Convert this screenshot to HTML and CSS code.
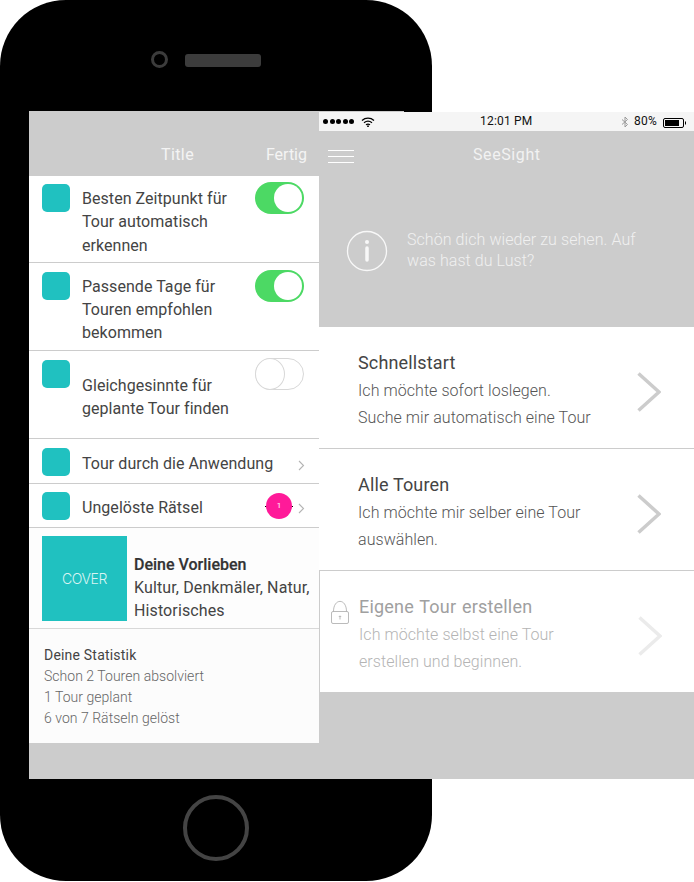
FILE: index.html
```html
<!DOCTYPE html>
<html lang="de">
<head>
<meta charset="utf-8">
<title>SeeSight</title>
<link rel="stylesheet" href="styles.css">
</head>
<body>
<div class="stage">
  <div class="phone">
    <span class="camera"></span>
    <span class="speaker"></span>
    <span class="phone-screen"></span>
    <span class="home"></span>
  </div>
  <div class="screens">
    <section class="settings">
      <header class="settings-head">
        <span class="settings-title">Title</span>
        <span class="settings-done">Fertig</span>
      </header>
      <div class="row row-first">
        <span class="tile"></span>
        <p class="row-text">Besten Zeitpunkt für<br>Tour automatisch<br>erkennen</p>
        <span class="toggle toggle-on"><span class="knob"></span></span>
      </div>
      <div class="row row-tall">
        <span class="tile"></span>
        <p class="row-text">Passende Tage für<br>Touren empfohlen<br>bekommen</p>
        <span class="toggle toggle-on"><span class="knob"></span></span>
      </div>
      <div class="row row-tall row-off">
        <span class="tile"></span>
        <p class="row-text">Gleichgesinnte für<br>geplante Tour finden</p>
        <span class="toggle toggle-off"><span class="knob"></span></span>
      </div>
      <div class="row row-link">
        <span class="tile"></span>
        <p class="row-text">Tour durch die Anwendung</p>
        <svg class="chev-small" viewBox="0 0 8 12" width="8" height="12"><path d="M1 1l4.500 4.500L1 10"/></svg>
      </div>
      <div class="row row-link row-last">
        <span class="tile"></span>
        <p class="row-text">Ungelöste Rätsel</p>
        <span class="badge">1</span>
        <svg class="chev-small" viewBox="0 0 8 12" width="8" height="12"><path d="M1 1l4.500 4.500L1 10"/></svg>
      </div>
      <div class="prefs">
        <div class="cover">COVER</div>
        <p class="prefs-text"><b>Deine Vorlieben</b><br>Kultur, Denkmäler, Natur,<br>Historisches</p>
      </div>
      <div class="stats">
        <h2 class="stats-title">Deine Statistik</h2>
        <p class="stats-line">Schon 2 Touren absolviert</p>
        <p class="stats-line">1 Tour geplant</p>
        <p class="stats-line">6 von 7 Rätseln gelöst</p>
      </div>
    </section>
    <section class="home-screen">
      <div class="status">
        <div class="status-left">
          <span class="dots"><i></i><i></i><i></i><i></i><i></i></span>
          <svg class="wifi" viewBox="0 0 14 10" width="14" height="10"><path d="M1 3.500C4.500 .4 9.500 .4 13 3.500M3 5.800C5.500 3.800 8.500 3.800 11 5.800M5 7.800C6.200 7 7.800 7 9 7.800"/><circle cx="7" cy="9.200" r=".9"/></svg>
        </div>
        <span class="status-time">12:01 PM</span>
        <div class="status-right">
          <svg class="bt" viewBox="0 0 8 12" width="8" height="12"><path d="M1 3.500l5.500 5L4 11V1l2.500 2.500L1 8.500"/></svg>
          <span class="pct">80%</span>
          <svg class="battery" viewBox="0 0 24 10" width="24" height="10"><rect x=".5" y=".5" width="20" height="9" rx="1.500" fill="none" stroke="#000"/><rect x="2" y="2" width="14" height="6" fill="#000"/><path d="M22 3.500h1v3h-1z" fill="#000"/></svg>
        </div>
      </div>
      <div class="hero">
        <div class="nav">
          <span class="burger"><i></i><i></i><i></i></span>
          <span class="nav-title">SeeSight</span>
        </div>
        <div class="hello">
          <svg class="info" viewBox="0 0 42 42" width="42" height="42"><circle cx="21" cy="21" r="19.500"/><circle class="info-dot" cx="21" cy="12" r="2"/><path d="M21 18v12"/></svg>
          <p class="hello-text">Schön dich wieder zu sehen. Auf<br>was hast du Lust?</p>
        </div>
      </div>
      <a class="item">
        <div class="item-body">
          <h3 class="item-title">Schnellstart</h3>
          <p class="item-sub">Ich möchte sofort loslegen.<br>Suche mir automatisch eine Tour</p>
        </div>
        <svg class="chev" viewBox="0 0 24 40" width="24" height="40"><path d="M1.500 1.500L22 20 1.500 38.500"/></svg>
      </a>
      <a class="item">
        <div class="item-body">
          <h3 class="item-title">Alle Touren</h3>
          <p class="item-sub">Ich möchte mir selber eine Tour<br>auswählen.</p>
        </div>
        <svg class="chev" viewBox="0 0 24 40" width="24" height="40"><path d="M1.500 1.500L22 20 1.500 38.500"/></svg>
      </a>
      <a class="item item-locked">
        <svg class="lock" viewBox="0 0 18 24" width="18" height="24"><path d="M2.500 11.500C2.500 -2 15.500 -2 15.500 11.500"/><rect x=".5" y="11.500" width="17" height="12" rx="1.500"/><path d="M9 19.500v-3.500M7.800 17l1.200-1.200L10.200 17"/></svg>
        <div class="item-body">
          <h3 class="item-title">Eigene Tour erstellen</h3>
          <p class="item-sub">Ich möchte selbst eine Tour<br>erstellen und beginnen.</p>
        </div>
        <svg class="chev" viewBox="0 0 24 40" width="24" height="40"><path d="M1.500 1.500L22 20 1.500 38.500"/></svg>
      </a>
    </section>
  </div>
</div>
</body>
</html>
```

FILE: styles.css
```css
* { box-sizing: border-box; }
html, body { margin: 0; padding: 0; background: #fff; }
body { font-family: Roboto, "Liberation Sans", sans-serif; color: #444; }
p, h2, h3 { margin: 0; font-weight: inherit; font-size: inherit; }

.stage { position: relative; width: 694px; height: 882px; overflow: hidden; }

.phone { position: absolute; left: 0; top: 0; width: 432px; height: 881px; background: #000; border-radius: 66px; }
.camera { position: absolute; left: 151px; top: 51px; width: 17px; height: 17px; border: 3px solid #3c3c3c; border-radius: 50%; }
.speaker { position: absolute; left: 185px; top: 54px; width: 76px; height: 13px; background: #3c3c3c; border-radius: 3px; }
.phone-screen { position: absolute; left: 29px; top: 111px; width: 375px; height: 668px; background: #ccc; }
.home { position: absolute; left: 183px; top: 795px; width: 66px; height: 66px; border: 4px solid #444; border-radius: 50%; }

.screens { position: absolute; left: 29px; top: 111px; display: flex; width: 665px; height: 668px; }

.settings { width: 290px; height: 632px; background: #fff; display: flex; flex-direction: column; }
.settings-head { position: relative; height: 65px; flex: none; background: #ccc; color: #f4f4f4; font-size: 16px; }
.settings-title { position: absolute; left: 132px; top: 34px; line-height: 19px; letter-spacing: .4px; }
.settings-done { position: absolute; right: 12px; top: 34px; line-height: 19px; }

.row { display: flex; position: relative; padding-left: 13px; border-bottom: 1px solid #ccc; font-size: 16px; line-height: 23px; letter-spacing: .05px; flex: none; }
.row-first { height: 87px; padding-top: 8px; line-height: 23.300px; }
.row-tall { height: 88px; padding-top: 9px; }
.row-first .row-text, .row-tall .row-text { padding-top: 3px; }
.row-off .row-text { padding-top: 14px; }
.row-link { height: 45px; padding-top: 9px; align-items: flex-start; }
.row-last { height: 44px; padding-top: 8px; }
.row-link .row-text { padding-top: 4px; flex: 1; }
.row-last::before { content: ""; position: absolute; left: 236px; top: 22px; width: 28px; height: 1px; background: #000; }
.tile { width: 28px; height: 28px; flex: none; background: #20c1c0; border-radius: 5px; margin-right: 12px; }
.row-text { color: #444; }

.toggle { position: absolute; left: 226px; top: 7px; width: 49px; height: 32px; border-radius: 16px; }
.row-first .toggle { top: 6px; }
.toggle-on { background: #4cd964; }
.toggle-off { background: #fff; border: 1px solid #d8d8d8; }
.knob { position: absolute; left: 19px; top: 2px; width: 28px; height: 28px; border-radius: 50%; background: #fff; }
.toggle-off .knob { left: -1px; top: -1px; width: 30px; height: 32px; border: 1px solid #d8d8d8; background: #fff; }

.chev-small { position: absolute; left: 269px; top: 21px; fill: none; stroke: #b4b4b4; stroke-width: 1.100; }
.row-last .chev-small { top: 19px; }
.badge { position: absolute; left: 237px; top: 9px; width: 26px; height: 26px; border-radius: 50%; background: #ff1a99; color: #fff; font-size: 8px; line-height: 26px; text-align: center; }

.prefs { height: 101px; flex: none; display: flex; padding: 8px 0 0 13px; background: #fdfdfd; border-bottom: 1px solid #d8d8d8; }
.cover { width: 85px; height: 85px; flex: none; background: #20c1c0; color: #d8f4f3; font: 300 14px/85px Inter, "Liberation Sans", sans-serif; letter-spacing: -.35px; text-align: center; margin-right: 7px; }
.prefs-text { font-size: 16px; line-height: 23px; padding-top: 17px; color: #444; white-space: nowrap; letter-spacing: .12px; }
.prefs-text b { font-weight: 500; color: #333; letter-spacing: 0; -webkit-text-stroke: .2px #333; }

.stats { flex: 1; padding: 16px 0 0 15px; background: #fcfcfc; font-size: 14px; line-height: 21px; }
.stats-title { color: #444; font-weight: 400; letter-spacing: .2px; }
.stats-line { color: #666; font-weight: 300; letter-spacing: .03px; }

.home-screen { width: 375px; height: 667px; margin-top: 1px; background: #ccc; display: flex; flex-direction: column; }
.status { height: 19px; flex: none; background: #f5f5f5; display: flex; align-items: center; justify-content: space-between; position: relative; color: #111; font-size: 12px; }
.status-left { display: flex; align-items: center; gap: 7px; padding-left: 4px; }
.dots { display: flex; gap: 1.500px; }
.dots i { width: 5px; height: 5px; border-radius: 50%; background: #000; }
.wifi { fill: #000; stroke: none; }
.wifi path { fill: none; stroke: #000; stroke-width: 1.300; }
.status-time { position: absolute; left: 161px; top: 1px; line-height: 17px; letter-spacing: .2px; }
.status-right { display: flex; align-items: center; gap: 5px; padding-right: 7px; }
.bt { fill: none; stroke: #999; stroke-width: 1; }
.pct { line-height: 17px; letter-spacing: .2px; margin-right: 1px; }
.battery { margin-top: 2px; }

.hero { height: 196px; flex: none; display: flex; flex-direction: column; color: #f2f2f2; }
.nav { position: relative; height: 47px; flex: none; }
.burger { position: absolute; left: 9px; top: 19px; display: flex; flex-direction: column; gap: 5px; }
.burger i { display: block; width: 26px; height: 1px; background: #fff; }
.nav-title { position: absolute; left: 154px; top: 14px; line-height: 19px; font-size: 16px; letter-spacing: .6px; }
.hello { display: flex; align-items: center; padding: 50px 0 0 27px; }
.info { fill: none; stroke: #f8f8f8; stroke-width: 1.300; margin: 2px 19px 0 0; }
.info path { stroke-width: 3.500; stroke-linecap: round; }
.info-dot { fill: #f8f8f8; stroke: none; }
.hello-text { font-size: 16px; font-weight: 300; line-height: 21px; color: #f0f0f0; letter-spacing: .07px; }

.item { height: 122px; flex: none; display: flex; align-items: center; position: relative; background: #fff; border-bottom: 1px solid #ccc; padding-left: 39px; }
.item-body { padding-top: 5px; }
.item-title { font-size: 18px; line-height: 27px; color: #444; font-weight: 400; letter-spacing: .15px; margin-bottom: 1px; }
.item-sub { font-size: 16px; line-height: 27px; font-weight: 300; color: #555; letter-spacing: .06px; }
.chev { position: absolute; left: 318px; top: 45px; fill: none; stroke: #ccc; stroke-width: 3.500; }
.item-locked { height: 121px; border-bottom: 0; border-left: 1px solid #ccc; }
.item-locked .item-title { color: #a0a0a0; letter-spacing: .2px; word-spacing: 1px; }
.item-locked .item-sub { color: #b4b4b4; }
.item-locked .chev { stroke: #ebebeb; }
.lock { position: absolute; left: 11px; top: 29px; fill: none; stroke: #aaa; stroke-width: .8; }
```
